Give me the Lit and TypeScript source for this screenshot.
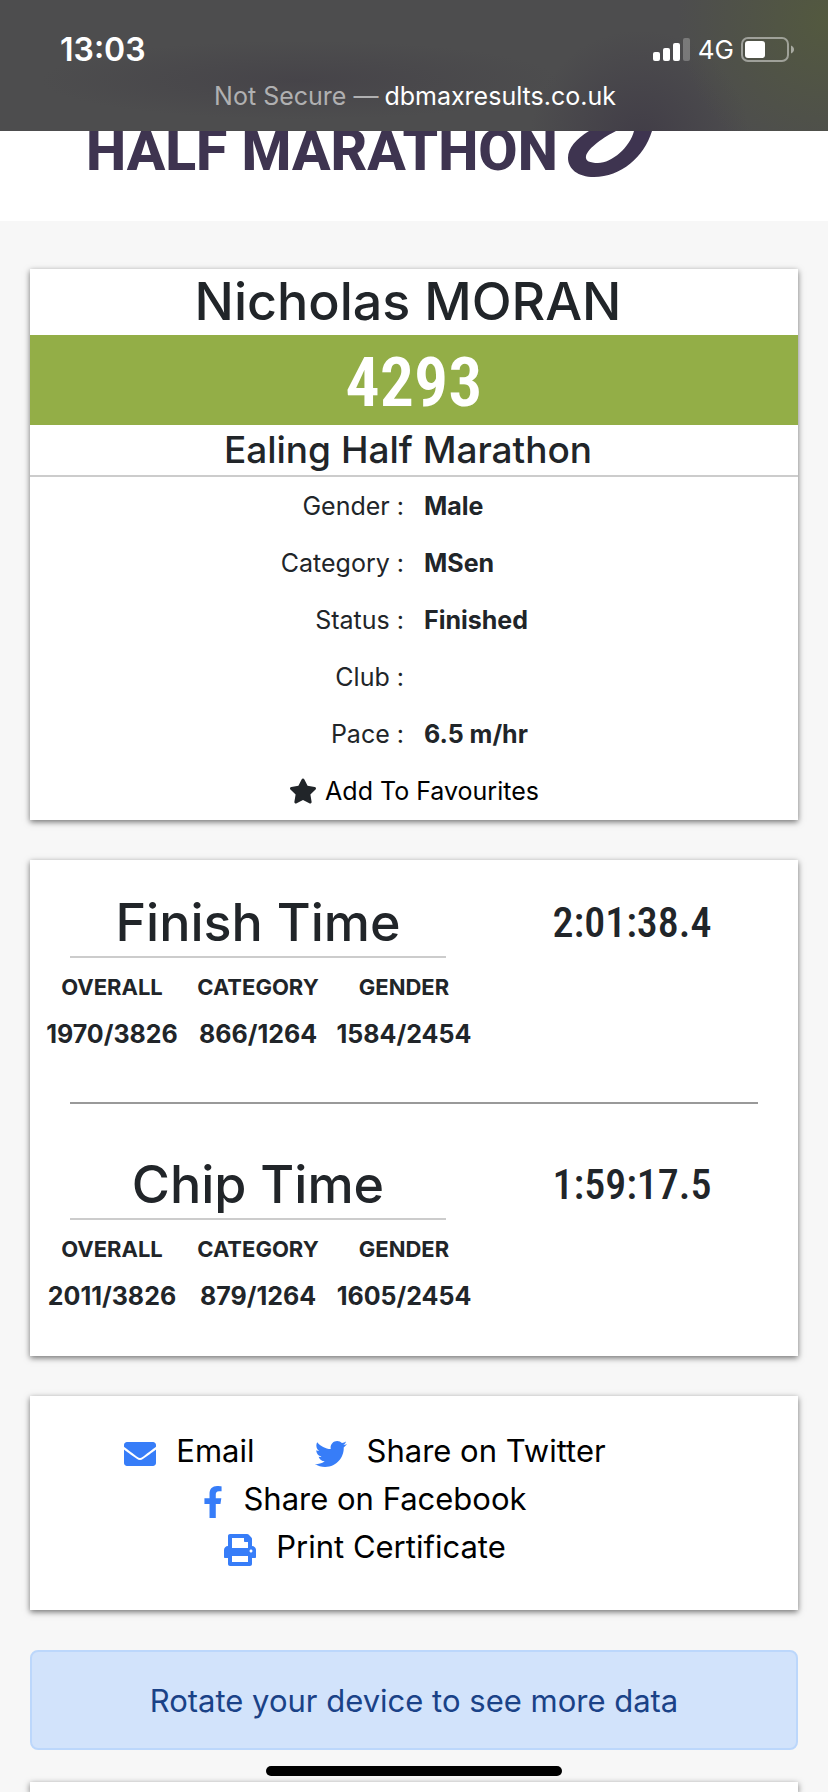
import { LitElement, html, css, svg } from "lit";
import { customElement, property } from "lit/decorators.js";

const sans = css`Inter, Roboto, "Liberation Sans", sans-serif`;
const narrow = css`"Roboto Condensed", "Liberation Sans Narrow", Roboto, sans-serif`;

@customElement("status-bar")
class StatusBar extends LitElement {
  static styles = css`
    :host {
      display: block;
      position: relative;
      z-index: 1;
      box-sizing: border-box;
      height: 131px;
      padding: 32px 34px 0 60px;
      color: #fff;
      font-family: ${sans};
      background:
        radial-gradient(circle at 100% 20px, #53593f 0, rgba(83, 89, 63, 0) 150px),
        radial-gradient(circle at 640px 140px, #413d47 0, rgba(65, 61, 71, 0) 110px),
        radial-gradient(ellipse at 300px 80px, #464449 0, rgba(70, 68, 73, 0) 260px),
        #4d4d4e;
    }
    .top { display: flex; justify-content: space-between; align-items: center; height: 36px; }
    .time { font-size: 32px; line-height: 36px; font-weight: 600; }
    .status { display: flex; align-items: center; gap: 7px; font-size: 26px; line-height: 36px; }
    .address { display: flex; justify-content: center; gap: 6px; margin: 12px 0 0; padding-right: 24px; font-size: 25px; line-height: 32px; }
    .muted { color: #b0b0b1; }
    svg { display: block; }
  `;
  render() {
    return html`
      <div class="top">
        <span class="time">13:03</span>
        <span class="status">
          <svg width="38" height="24" viewBox="0 0 38 24" fill="#fff" aria-label="Signal">
            <rect x="0" y="14" width="7" height="9" rx="2" />
            <rect x="10" y="10" width="7" height="13" rx="2" />
            <rect x="20" y="5" width="7" height="18" rx="2" />
            <rect x="30" y="0" width="7" height="23" rx="2" opacity=".25" />
          </svg>
          <span>4G</span>
          <svg width="53" height="26" viewBox="0 0 53 26" aria-label="Battery">
            <rect x="1" y="1" width="46" height="23" rx="6" fill="none" stroke="#fff" stroke-opacity=".45" stroke-width="2" />
            <rect x="4" y="4" width="20" height="17" rx="3" fill="#fff" />
            <path d="M50 8.500c4 1.500 4 6.500 0 8z" fill="#fff" opacity=".5" />
          </svg>
        </span>
      </div>
      <p class="address"><span class="muted">Not Secure —</span><span>dbmaxresults.co.uk</span></p>
    `;
  }
}

@customElement("race-logo")
class RaceLogo extends LitElement {
  static styles = css`
    :host { display: flex; height: 90px; background: #fff; padding-left: 86px; gap: 8px; color: #3e3450; }
    .name { font: 800 57px/40px Roboto, "Liberation Sans", sans-serif; white-space: nowrap; margin: 0; }
    svg { display: block; flex: none; }
  `;
  render() {
    return html`
      <h1 class="name">HALF MARATHON</h1>
      <svg width="90" height="50" viewBox="0 0 90 50" fill="currentColor" aria-hidden="true">
        <path d="M23 0C10 8 2 17 2 27C2 38 12 46 28 46C55 46 78 26 86 0H68C64 16 46 32 32 32C24 32 19 30 20 25C22 17 38 6 50 0Z" />
      </svg>
    `;
  }
}

@customElement("time-result")
class TimeResult extends LitElement {
  @property() label = "";
  @property() time = "";
  @property({ attribute: false }) ranks: string[] = [];
  static styles = css`
    :host { display: grid; grid-template-columns: 456fr 312fr; }
    h2 { margin: 0 40px; border-bottom: 2px solid #ccc; text-align: center; font-size: 52px; line-height: 66px; font-weight: 500; }
    .time { font-family: ${narrow}; font-weight: 500; font-size: 42px; line-height: 66px; text-align: center; padding-right: 20px; }
    table { width: 100%; border-collapse: collapse; table-layout: fixed; }
    .edge { width: 164px; }
    th, td { padding: 0; text-align: center; }
    th { font-size: 22px; line-height: 58px; font-weight: 700; }
    td { font-size: 25px; line-height: 36px; font-weight: 700; }
  `;
  render() {
    return html`
      <div>
        <h2>${this.label}</h2>
        <table>
          <thead><tr><th class="edge" scope="col">OVERALL</th><th scope="col">CATEGORY</th><th class="edge" scope="col">GENDER</th></tr></thead>
          <tbody><tr>${this.ranks.map((r) => html`<td>${r}</td>`)}</tr></tbody>
        </table>
      </div>
      <div class="time">${this.time}</div>
    `;
  }
}

const icons = {
  star: svg`<svg width="28" height="26" viewBox="0 0 576 512" fill="currentColor"><path d="M259.300 17.800L194 150.200 47.900 171.500c-26.200 3.800-36.700 36.100-17.700 54.600l105.700 103-25 145.500c-4.500 26.300 23.200 46 46.400 33.700L288 439.600l130.700 68.700c23.200 12.200 50.900-7.400 46.400-33.700l-25-145.500 105.700-103c19-18.500 8.500-50.800-17.700-54.600L382 150.200 316.700 17.800c-11.700-23.600-45.600-23.900-57.400 0z"/></svg>`,
  mail: svg`<svg width="32" height="32" viewBox="0 0 512 512" fill="currentColor"><path d="M502.300 190.800c3.900-3.100 9.700-.2 9.700 4.700V400c0 26.500-21.500 48-48 48H48c-26.500 0-48-21.500-48-48V195.600c0-5 5.700-7.800 9.700-4.700 22.400 17.400 52.100 39.500 154.100 113.600 21.100 15.400 56.700 47.800 92.200 47.600 35.700.3 72-32.800 92.300-47.600 102-74.100 131.600-96.300 154-113.700zM256 320c23.200.4 56.600-29.200 73.400-41.400 132.700-96.300 142.800-104.700 173.400-128.700 5.800-4.500 9.200-11.500 9.200-18.900v-19c0-26.500-21.500-48-48-48H48c-26.500 0-48 21.500-48 48v19c0 7.400 3.400 14.300 9.200 18.900 30.600 23.900 40.700 32.400 173.400 128.700 16.800 12.200 50.200 41.800 73.400 41.400z"/></svg>`,
  twitter: svg`<svg width="32" height="32" viewBox="0 0 512 512" fill="currentColor"><path d="M459.370 151.716c.325 4.548.325 9.097.325 13.645 0 138.720-105.583 298.558-298.558 298.558-59.452 0-114.680-17.219-161.137-47.106 8.447.974 16.568 1.299 25.340 1.299 49.055 0 94.213-16.568 130.274-44.832-46.132-.975-84.792-31.188-98.112-72.772 6.498.974 12.995 1.624 19.818 1.624 9.421 0 18.843-1.300 27.614-3.573-48.081-9.747-84.143-51.980-84.143-102.985v-1.299c13.969 7.797 30.214 12.670 47.431 13.319-28.264-18.843-46.781-51.005-46.781-87.391 0-19.492 5.197-37.360 14.294-52.954 51.655 63.675 129.300 105.258 216.365 109.807-1.624-7.797-2.599-15.918-2.599-24.040 0-57.828 46.782-104.934 104.934-104.934 30.213 0 57.502 12.670 76.670 33.137 23.715-4.548 46.456-13.320 66.599-25.340-7.798 24.366-24.366 44.833-46.132 57.827 21.117-2.273 41.584-8.122 60.426-16.243-14.292 20.791-32.161 39.308-52.628 54.253z"/></svg>`,
  facebook: svg`<svg width="20" height="32" viewBox="0 0 320 512" fill="currentColor"><path d="M279.140 288l14.220-92.660h-88.910v-60.130c0-25.350 12.420-50.060 52.240-50.060h40.420V6.260S260.430 0 225.360 0c-73.220 0-121.080 44.380-121.080 124.720v70.620H22.890V288h81.390v224h100.170V288z"/></svg>`,
  print: svg`<svg width="32" height="32" viewBox="0 0 512 512" fill="currentColor"><path d="M448 192V77.250c0-8.490-3.370-16.620-9.370-22.630L393.370 9.370c-6-6-14.140-9.370-22.630-9.370H96C78.330 0 64 14.330 64 32v160c-35.350 0-64 28.650-64 64v112c0 8.840 7.160 16 16 16h48v96c0 17.670 14.330 32 32 32h320c17.670 0 32-14.330 32-32v-96h48c8.840 0 16-7.160 16-16V256c0-35.350-28.650-64-64-64zm-64 256H128v-96h256v96zm0-224H128V64h192v48c0 8.840 7.160 16 16 16h48v96zm48 72c-13.250 0-24-10.750-24-24 0-13.260 10.750-24 24-24s24 10.740 24 24c0 13.250-10.750 24-24 24z"/></svg>`,
};

@customElement("app-root")
class AppRoot extends LitElement {
  static styles = css`
    :host { display: block; min-height: 100vh; box-sizing: border-box; background: #f7f7f7; color: #212529; font-family: ${sans}; }
    main { display: grid; gap: 40px; padding: 48px 30px 0; }
    .card { background: #fff; box-shadow: 0 2px 6px rgba(0, 0, 0, .55); }
    .runner { text-align: center; }
    .runner h2 { margin: 0; padding-right: 12px; font-size: 52px; line-height: 66px; font-weight: 500; }
    .bib { padding-top: 6px; background: #93ae47; color: #fff; font-family: ${narrow}; font-weight: 600; font-size: 68px; line-height: 84px; }
    .runner h3 { margin: 0; padding-right: 12px; border-bottom: 2px solid #ccc; font-size: 37px; line-height: 50px; font-weight: 500; }
    dl { display: grid; grid-template-columns: 1fr 1fr; column-gap: 20px; margin: 0; padding-top: 1px; font-size: 25px; line-height: 57px; }
    dt { text-align: right; }
    dd { margin: 0; text-align: left; font-weight: 700; }
    .favourite { display: flex; align-items: center; justify-content: center; gap: 8px; width: 100%; height: 57px; padding: 0 0 2px; border: 0; background: none; color: #000; font: 400 25px/30px ${sans}; }
    .favourite svg { color: #212529; }
    svg { display: block; flex: none; }
    .times { padding: 30px 0 42px; }
    hr { margin: 50px 40px 48px; border: 0; border-top: 2px solid #999; }
    .share { padding: 31px 98px 39px 0; }
    .row { display: flex; justify-content: center; gap: 60px; }
    .row a { display: flex; align-items: center; gap: 20px; color: #000; text-decoration: none; font-size: 31px; line-height: 48px; }
    .row svg { margin-top: 6px; color: #377df8; }
    .alert { box-sizing: border-box; height: 100px; border: 2px solid #bcd7fb; border-radius: 8px; background: #d2e3fb; color: #1a4287; font-size: 31px; line-height: 98px; text-align: center; }
    .next { height: 10px; margin-top: -8px; }
    .home { position: fixed; bottom: 16px; left: 50%; width: 296px; height: 10px; margin-left: -148px; border-radius: 5px; background: #000; }
  `;
  details = [["Gender", "Male"], ["Category", "MSen"], ["Status", "Finished"], ["Club", ""], ["Pace", "6.5 m/hr"]];
  render() {
    return html`
      <status-bar></status-bar>
      <race-logo></race-logo>
      <main>
        <section class="card runner">
          <h2>Nicholas MORAN</h2>
          <div class="bib">4293</div>
          <h3>Ealing Half Marathon</h3>
          <dl>${this.details.map(([k, v]) => html`<dt>${k} :</dt><dd>${v}</dd>`)}</dl>
          <button class="favourite" type="button">${icons.star}<span>Add To Favourites</span></button>
        </section>
        <section class="card times">
          <time-result label="Finish Time" time="2:01:38.4" .ranks=${["1970/3826", "866/1264", "1584/2454"]}></time-result>
          <hr />
          <time-result label="Chip Time" time="1:59:17.5" .ranks=${["2011/3826", "879/1264", "1605/2454"]}></time-result>
        </section>
        <section class="card share">
          <div class="row"><a href="#email">${icons.mail}Email</a><a href="#twitter">${icons.twitter}Share on Twitter</a></div>
          <div class="row"><a href="#facebook">${icons.facebook}Share on Facebook</a></div>
          <div class="row"><a href="#print">${icons.print}Print Certificate</a></div>
        </section>
        <div class="alert" role="alert">Rotate your device to see more data</div>
        <section class="card next"></section>
      </main>
      <div class="home"></div>
    `;
  }
}
